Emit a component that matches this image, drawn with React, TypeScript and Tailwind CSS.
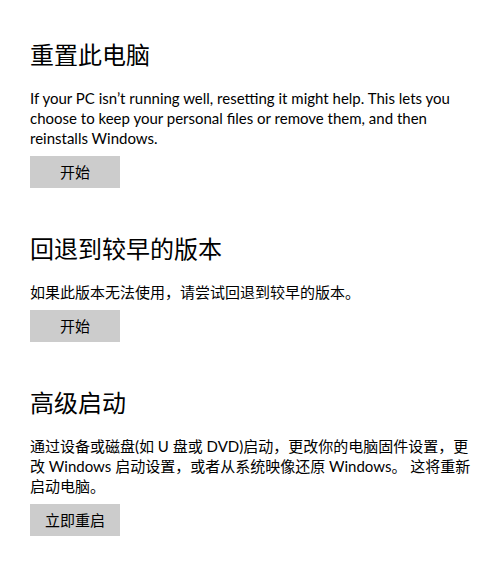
import React from 'react';

type Section = {
    title: string;
    body: string;
    action: string;
};

// Recovery options, in the order they show on the page
const sections: Section[] = [
    {
        title: '重置此电脑',
        body: 'If your PC isn’t running well, resetting it might help. This lets you choose to keep your personal files or remove them, and then reinstalls Windows.',
        action: '开始',
    },
    {
        title: '回退到较早的版本',
        body: '如果此版本无法使用，请尝试回退到较早的版本。',
        action: '开始',
    },
    {
        title: '高级启动',
        body: '通过设备或磁盘(如 U 盘或 DVD)启动，更改你的电脑固件设置，更改 Windows 启动设置，或者从系统映像还原 Windows。 这将重新启动电脑。',
        action: '立即重启',
    },
];

const RecoverySection: React.FC<Section> = ({ title, body, action }) => (
    <section className="flex flex-col items-start">
        <h2 className="text-[24px] leading-[32px] font-normal text-black">{title}</h2>
        <p className="mt-[17px] text-[15px] leading-[20px] text-black">{body}</p>
        <button className="mt-[8px] w-[90px] h-[32px] bg-[#cccccc] text-[15px] text-black">{action}</button>
    </section>
);

const App: React.FC = () => {
    return (
        <div
            className="min-h-screen bg-white pt-[39px] pl-[30px] pr-[26px]"
            style={{ fontFamily: '"Lato", "Noto Sans CJK SC", sans-serif' }}
        >
            <div className="flex flex-col gap-[45px] max-w-[445px]">
                {sections.map((s) => (
                    <RecoverySection key={s.title} {...s} />
                ))}
            </div>
        </div>
    );
};

export default App;
